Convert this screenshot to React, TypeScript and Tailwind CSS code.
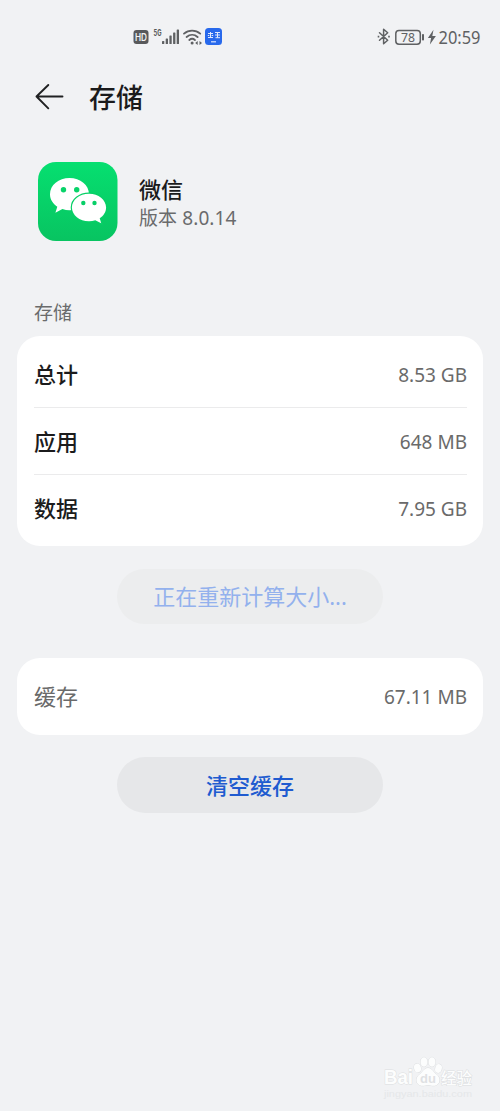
import React from "react";

const ICON = "#5f6163";

function SignalIcons() {
  return (
    <svg width="90" height="22" viewBox="0 0 90 22" className="block">
      <rect x="0.5" y="4" width="15" height="14" rx="3" fill="#58595b" />
      <text x="8" y="14.8" textAnchor="middle" fontFamily="Inter, sans-serif" fontSize="10" fontWeight="600" fill="#f1f2f4" textLength="12" lengthAdjust="spacingAndGlyphs">HD</text>
      <text x="20.5" y="9.500" fontFamily="Inter, sans-serif" fontSize="8.500" fontWeight="700" fill="#58595b" textLength="8" lengthAdjust="spacingAndGlyphs">5G</text>
      <g fill={ICON}>
        <rect x="29" y="15" width="2.300" height="3" rx=".6" />
        <rect x="32.700" y="12.500" width="2.300" height="5.500" rx=".6" />
        <rect x="36.400" y="9.500" width="2.300" height="8.500" rx=".6" />
        <rect x="40.100" y="6.500" width="2.300" height="11.500" rx=".6" />
        <rect x="43.700" y="3.500" width="2.300" height="14.500" rx=".6" />
      </g>
      <g fill="none" stroke={ICON} strokeWidth="1.900" strokeLinecap="round">
        <path d="M51 7.600c4.700-4 11.500-4 16.200 0" />
        <path d="M53.600 11c3.300-2.800 7.800-2.800 11 0" />
        <path d="M56.300 14c1.800-1.500 3.900-1.500 5.600 0" />
      </g>
      <circle cx="59.100" cy="17" r="1.500" fill={ICON} />
      <path d="M62.200 17l2.500-2v4zM69 17l-2.500-2v4z" fill={ICON} />
      <rect x="72" y="2" width="17" height="17" rx="3.500" fill="#2869ec" />
      <path d="M75 7.500h5M77.500 6v5M75 11.500h5M74.800 9.500h1.500M78.700 9.500h1.500M82 6.500h5M82 9h5M84.500 6v5.700M82.500 11.700h4.500" stroke="#fff" strokeWidth="1" opacity=".85" />
      <path d="M78 15.800h5" stroke="#d8e5ff" strokeWidth="1.200" />
    </svg>
  );
}

function PowerIcons() {
  return (
    <svg width="108" height="26" viewBox="0 -2 108 26" className="block">
      <g fill="none" stroke={ICON} strokeWidth="1.500" strokeLinejoin="round" strokeLinecap="round">
        <path d="M2.500 6.800l8.200 7.400-4.100 3.600V3.200l4.100 3.600-8.200 7.400" />
        <rect x="18.800" y="4.400" width="24.500" height="13.800" rx="3.200" />
      </g>
      <path d="M1.500 9.700v1.800M12 9.700v1.800" stroke={ICON} strokeWidth="1.600" />
      <rect x="45" y="8" width="2" height="6.500" rx=".8" fill={ICON} />
      <text x="31" y="15.800" textAnchor="middle" fontFamily="Noto Sans, sans-serif" fontSize="12.500" fill={ICON} textLength="14" lengthAdjust="spacingAndGlyphs">78</text>
      <path d="M56.500 3.700l-5.600 8.300h3.200l-1.200 6.600 6-8.700h-3.600z" fill={ICON} />
      <text x="61.500" y="17.800" fontFamily="Noto Sans, sans-serif" fontSize="17.800" fill={ICON} textLength="42" lengthAdjust="spacingAndGlyphs">20:59</text>
    </svg>
  );
}

function WeChatIcon() {
  return (
    <svg width="80" height="80" viewBox="0 0 80 80" className="block">
      <defs>
        <linearGradient id="wechat-bg" x1="0" y1="0" x2="0" y2="1">
          <stop offset="0" stopColor="#06df70" />
          <stop offset="1" stopColor="#08c461" />
        </linearGradient>
      </defs>
      <rect width="79.500" height="79" rx="18" fill="url(#wechat-bg)" />
      <path d="M31.500 16C20.700 16 12 23.200 12 32.200c0 5.100 2.900 9.500 7.300 12.500l-1.900 6 7-3.600c2.300.8 4.600 1.200 7.100 1.200C42.300 48.300 51 41.200 51 32.200S42.300 16 31.500 16z" fill="#fff" />
      <circle cx="25.500" cy="27.800" r="2.700" fill="#07d369" />
      <circle cx="38.700" cy="27.800" r="2.700" fill="#07d369" />
      <path d="M51 31.700c9.500 0 17.100 6.200 17.100 13.800 0 4.400-2.500 8.200-6.400 10.800l1.500 5-5.900-3c-2 .7-4.100 1-6.300 1-9.500 0-17.100-6.200-17.100-13.800S41.500 31.700 51 31.700z" fill="#fff" stroke="#07d066" strokeWidth="2.400" paintOrder="stroke" />
      <circle cx="45.300" cy="41" r="2.200" fill="#07cf67" />
      <circle cx="56.500" cy="41" r="2.200" fill="#07cf67" />
    </svg>
  );
}

function Row({ label, value, divider }: { label: string; value: string; divider?: boolean }) {
  return (
    <div className={divider ? "flex h-[67px] items-center justify-between border-b border-[#ebebec]" : "flex h-[67px] items-center justify-between"}>
      <span className="text-[22px] font-medium text-[#1b1b1c]">{label}</span>
      <span className="pt-[2px] text-[19px] text-[#6a6a6a]">{value}</span>
    </div>
  );
}

function Watermark() {
  return (
    <div className="absolute left-[383px] top-[1055px] h-[46px] w-[92px]">
      <svg width="92" height="46" viewBox="0 0 92 46" className="block">
        <g fill="#fcfdfd" stroke="#dcdee0" strokeWidth="1" paintOrder="stroke" fontWeight="700">
          <text x="1" y="29" fontFamily="Liberation Sans, sans-serif" fontSize="20" textLength="29" lengthAdjust="spacingAndGlyphs">Bai</text>
          <ellipse cx="34.500" cy="13" rx="3.400" ry="4.500" transform="rotate(-15 34.500 13)" />
          <ellipse cx="41" cy="7" rx="3.500" ry="4.700" />
          <ellipse cx="49" cy="7" rx="3.500" ry="4.700" />
          <ellipse cx="55.500" cy="13.500" rx="3.300" ry="4.400" transform="rotate(15 55.500 13.500)" />
          <path d="M45 13c-4 0-5 4-8.500 6.500-4.500 3.200-4 10.500 2 11.200 2.500.3 4.500-.7 6.500-.7s4 1 6.500.7c6-.7 6.500-8 2-11.200C50 17 49 13 45 13z" />
          <text x="45" y="28" textAnchor="middle" fontFamily="Liberation Sans, sans-serif" fontSize="13" fill="#dfe1e3" stroke="none">du</text>
          <text x="58" y="29" fontFamily="Noto Sans CJK SC, sans-serif" fontSize="15.500" fontWeight="500" textLength="31" lengthAdjust="spacingAndGlyphs">经验</text>
        </g>
        <text x="1" y="42" fontFamily="Liberation Sans, sans-serif" fontSize="9" fill="#e5e7e9" textLength="88" lengthAdjust="spacingAndGlyphs">jingyan.baidu.com</text>
      </svg>
    </div>
  );
}

export default function App() {
  return (
    <main className="relative h-[1111px] w-[500px] overflow-hidden bg-[#f1f2f4] font-['Noto_Sans','Noto_Sans_CJK_SC',sans-serif]">
      <header className="flex h-[74px] items-center justify-between pl-[133px] pr-[15px]">
        <SignalIcons />
        <PowerIcons />
      </header>
      <nav className="flex h-[46px] items-center pl-[35px]">
        <button aria-label="返回" className="block">
          <svg width="29" height="28" viewBox="0 0 29 28" fill="none" stroke="#202122" strokeWidth="1.900" strokeLinecap="round" strokeLinejoin="round" className="block">
            <path d="M27.500 13.500H1.500M13.300 2L1.500 13.500l11.800 11.800" />
          </svg>
        </button>
        <h1 className="ml-[25px] pt-[2px] text-[27px] font-medium leading-[40px] text-[#1b1b1c]">存储</h1>
      </nav>
      <section className="mt-[42px] flex h-[80px] pl-[38px]">
        <WeChatIcon />
        <div className="ml-[21px] pt-[12px]">
          <h2 className="text-[22px] font-medium leading-[30px] text-[#1b1b1c]">微信</h2>
          <p className="text-[19px] leading-[28px] tracking-[0.1px] text-[#6a6b6c]">版本 8.0.14</p>
        </div>
      </section>
      <h3 className="mt-[57px] pl-[34px] text-[19px] leading-[28px] text-[#6a6b6c]">存储</h3>
      <section className="mx-[17px] mt-[9px] h-[210px] rounded-[23px] bg-white pl-[17px] pr-[16px] pt-[5px]">
        <Row label="总计" value="8.53 GB" divider />
        <Row label="应用" value="648 MB" divider />
        <Row label="数据" value="7.95 GB" />
      </section>
      <button className="mx-auto mt-[23px] flex h-[55px] w-[266px] items-center justify-center rounded-full bg-[#ecedee] text-[22px] text-[#93b1ed]">正在重新计算大小...</button>
      <section className="mx-[17px] mt-[34px] flex h-[77px] items-center justify-between rounded-[23px] bg-white pl-[17px] pr-[16px]">
        <span className="text-[22px] text-[#6a6a6a]">缓存</span>
        <span className="pt-[2px] text-[19px] text-[#6a6a6a]">67.11 MB</span>
      </section>
      <button className="mx-auto mt-[22px] flex h-[56px] w-[266px] items-center justify-center rounded-full bg-[#e6e7e9] pt-px text-[22px] font-medium text-[#205bd0]">清空缓存</button>
      <Watermark />
    </main>
  );
}
